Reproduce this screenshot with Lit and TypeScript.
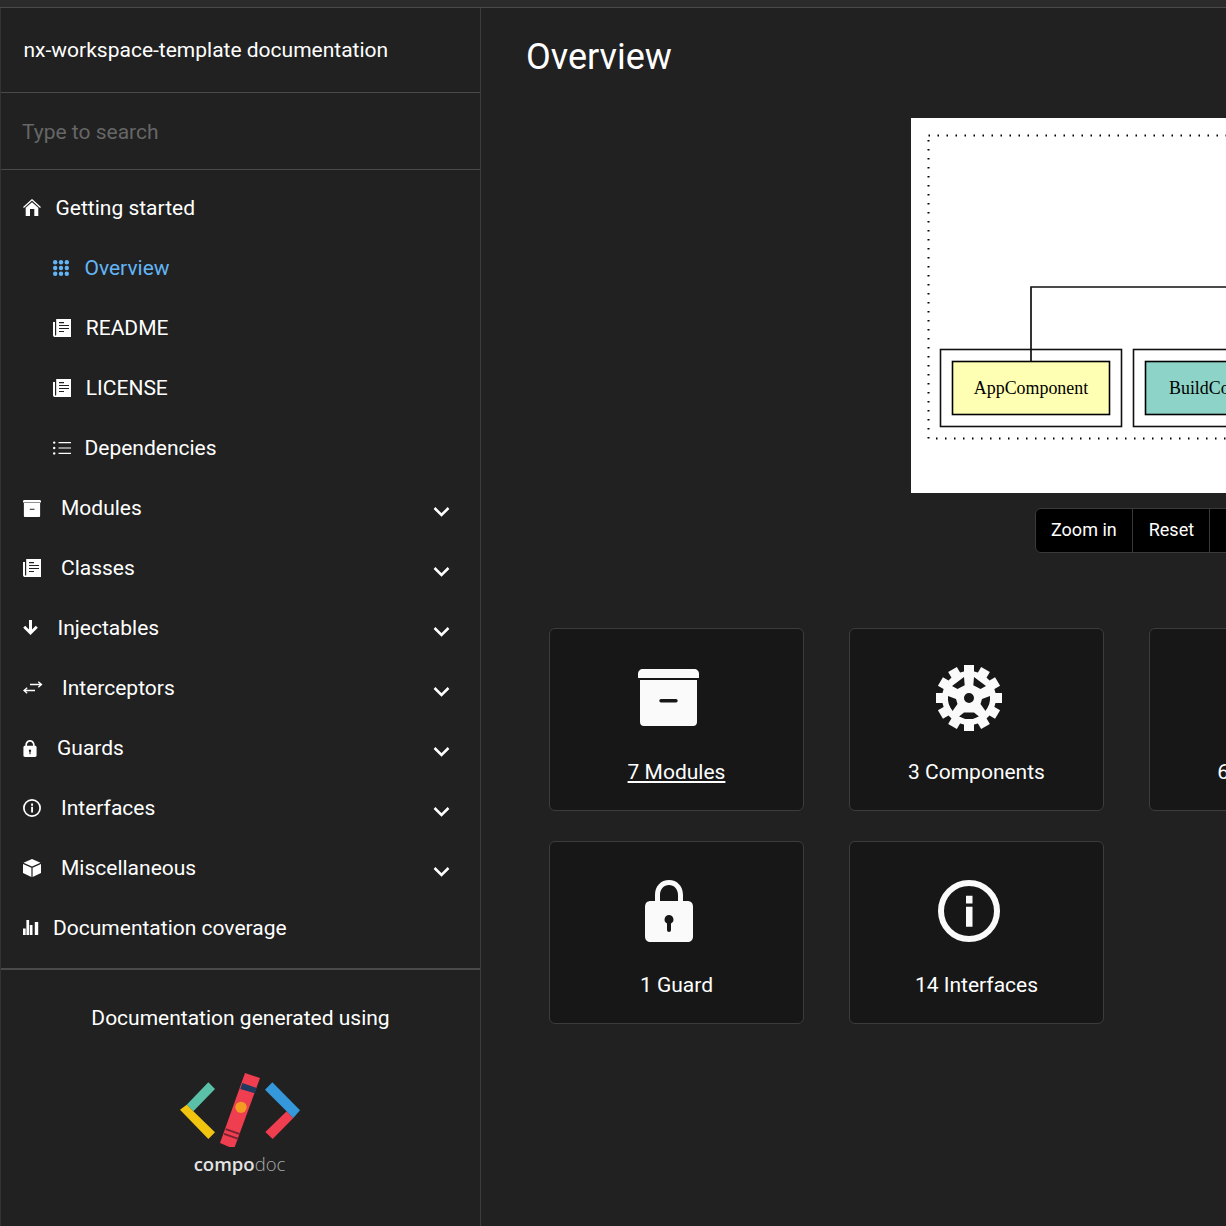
import { LitElement, html, css, svg, nothing } from 'lit'
import { customElement } from 'lit/decorators.js'

const infoIcon = (size: number) => svg`<svg width=${size} height=${size} viewBox="0 0 62 62"><circle cx="31" cy="31" r="28" fill="none" stroke="currentColor" stroke-width="6"/><path d="M28 15.700h6.500v7.700H28zM28 26.700h6.500v20H28z"/></svg>`

const keypadPos = [2.2, 8, 13.8]

const icons: Record<string, unknown> = {
  home: svg`<svg width="18" height="18" viewBox="0 0 18 18"><path d="M.5 8.500L9 .8l8.500 7.700" fill="none" stroke="currentColor" stroke-width="1.300"/><path d="M9 3.200l6.300 5.500V17h-4v-7H7v7H2.700V8.700z"/></svg>`,
  keypad: svg`<svg width="16" height="16" viewBox="0 0 16 16">${keypadPos.map(y => keypadPos.map(x => svg`<circle cx=${x} cy=${y} r="2.200"/>`))}</svg>`,
  paper: svg`<svg width="18" height="18" viewBox="0 0 18 18"><path fill-rule="evenodd" d="M4 0h14v18H2c-1 0-2-.6-2-2V3h2v13c0 .4.300.6.6.6s.6-.2.6-.6V0zm2 3v1.200h5V3zm0 3v1h10V6zm0 3v1h10V9zm0 3v1h5v-1z"/></svg>`,
  list: svg`<svg width="18" height="14" viewBox="0 0 18 14"><path d="M5.500 1h12.500v1.200H5.500zM5.500 6.400h12.500v1.200H5.500zM5.500 11.800h12.500V13H5.500z"/><circle cx="1.200" cy="1.600" r="1.200"/><circle cx="1.200" cy="7" r="1.200"/><circle cx="1.200" cy="12.400" r="1.200"/></svg>`,
  archive: svg`<svg width="18" height="17" viewBox="0 0 61 57"><path d="M5 0h51c3 0 5 2 5 5v3H0V5c0-3 2-5 5-5z"/><path fill-rule="evenodd" d="M3 10h55v44c0 2-1 3-3 3H6c-2 0-3-1-3-3zm20 19v4h16v-4z"/></svg>`,
  arrow: svg`<svg width="15" height="16" viewBox="0 0 15 16"><path d="M6 0h3v9.500l3.800-3.800 2 2L7.500 15 .2 7.700l2-2L6 9.500z"/></svg>`,
  swap: svg`<svg width="20" height="14" viewBox="0 0 20 14"><path fill="none" stroke="currentColor" stroke-width="1.300" d="M7 3.500h11.500M15.300.8l3.200 2.700-3.200 2.700M12 9.500H1M4.200 6.800L1 9.500l3.200 2.700"/></svg>`,
  lock: svg`<svg width="14" height="17" viewBox="0 0 48 62"><path fill-rule="evenodd" d="M7 21V18C7 8 14 0 24 0s17 8 17 18v3h1c4 0 6 2 6 6v29c0 4-2 6-6 6H6c-4 0-6-2-6-6V27c0-4 2-6 6-6zm6 0h22V18c0-7-5-12-11-12s-11 5-11 12zm11 14a4.500 4.500 0 0 0-2 8.500V50a2 2 0 0 0 4 0v-6.500A4.500 4.500 0 0 0 24 35z"/></svg>`,
  info: infoIcon(18),
  cube: svg`<svg width="18" height="18" viewBox="0 0 18 18"><path d="M9 0l8.500 3.800L9 7.600.5 3.800zM0 5l8.400 3.800V18L0 14zM18 5L9.600 8.800V18l8.400-4z"/></svg>`,
  bars: svg`<svg width="16" height="16" viewBox="0 0 16 16"><path d="M0 8.500h2.700V15H0zM3.400 0h2.700v15H3.400zM6.800 5h2.700v10H6.800zM11.800 2h3.400v13h-3.400z"/></svg>`
}

const cardIcons: Record<string, unknown> = {
  archive: svg`<svg width="61" height="59" viewBox="0 0 61 59"><path d="M5 0h51c3 0 5 2 5 5v4H0V5c0-3 2-5 5-5z"/><path fill-rule="evenodd" d="M2 11h57v42c0 2.500-1.500 4-4 4H6c-2.500 0-4-1.500-4-4zm21 19a1.700 1.700 0 0 0 0 3.400h15a1.700 1.700 0 0 0 0-3.400z"/></svg>`,
  gear: svg`<svg width="66" height="66" viewBox="0 0 66 66"><g transform="translate(33 33)">${[0, 30, 60, 90, 120, 150, 180, 210, 240, 270, 300, 330].map(a => svg`<rect x="-5" y="-33" width="10" height="12" transform="rotate(${a})"/>`)}<path fill-rule="evenodd" d="M0-27a27 27 0 1 0 0 54a27 27 0 1 0 0-54zM-5-21L-17-12L-11.500-9L-4.300-12.700zM5-21L17-12L11.500-9L4.300-12.700zM-21-2A21 21 0 0 0-16.500 13L-11.500 6L-13 1zM21-2A21 21 0 0 1 16.500 13L11.500 6L13 1zM-10 18.500A21 21 0 0 0 10 18.500L5 14.500H-5zM0-5a5 5 0 1 0 0 10a5 5 0 1 0 0-10z"/></g></svg>`,
  arrow: svg`<svg width="60" height="60" viewBox="0 0 15 15"><path d="M6 0h3v9.500l3.800-3.800 2 2L7.500 15 .2 7.700l2-2L6 9.500z"/></svg>`,
  lock: svg`<svg width="48" height="62" viewBox="0 0 48 62"><path fill-rule="evenodd" d="M10 21V15C10 6 16 0 24 0s14 6 14 15v6h4c4 0 6 2 6 6v29c0 4-2 6-6 6H6c-4 0-6-2-6-6V27c0-4 2-6 6-6zm5 0h18V15c0-6-4-10-9-10s-9 4-9 10zm9 14a4.500 4.500 0 0 0-2 8.500V50a2 2 0 0 0 4 0v-6.500A4.500 4.500 0 0 0 24 35z"/></svg>`,
  info: infoIcon(62)
}

interface NavItem {
  label: string
  icon: string
  box: number
  sub?: boolean
  active?: boolean
  chevron?: boolean
}

const nav: NavItem[] = [
  { label: 'Getting started', icon: 'home', box: 32.500 },
  { label: 'Overview', icon: 'keypad', box: 31.500, sub: true, active: true },
  { label: 'README', icon: 'paper', box: 32.800, sub: true },
  { label: 'LICENSE', icon: 'paper', box: 32.800, sub: true },
  { label: 'Dependencies', icon: 'list', box: 31.500, sub: true },
  { label: 'Modules', icon: 'archive', box: 38, chevron: true },
  { label: 'Classes', icon: 'paper', box: 38, chevron: true },
  { label: 'Injectables', icon: 'arrow', box: 34.500, chevron: true },
  { label: 'Interceptors', icon: 'swap', box: 39, chevron: true },
  { label: 'Guards', icon: 'lock', box: 34, chevron: true },
  { label: 'Interfaces', icon: 'info', box: 38, chevron: true },
  { label: 'Miscellaneous', icon: 'cube', box: 38, chevron: true },
  { label: 'Documentation coverage', icon: 'bars', box: 30 }
]

const cards = [
  { label: '7 Modules', icon: 'archive', link: true },
  { label: '3 Components', icon: 'gear' },
  { label: '6 Injectables', icon: 'arrow' },
  { label: '1 Guard', icon: 'lock' },
  { label: '14 Interfaces', icon: 'info' }
]

@customElement('app-root')
export class AppRoot extends LitElement {
  static styles = css`
    :host {
      display: block;
      width: 1226px;
      height: 1226px;
      overflow: hidden;
      background: #212121;
      color: #fff;
      font-family: Roboto, "Liberation Sans", sans-serif;
      font-size: 21px;
    }

    .topbar {
      height: 7px;
      background: #2b2b2b;
      border-bottom: 1px solid #4a4a4a;
    }

    .layout {
      display: flex;
      height: 1218px;
    }

    .sidebar {
      flex: none;
      width: 479px;
      border-left: 1px solid #333;
      border-right: 1px solid #3c3c3c;
      display: flex;
      flex-direction: column;
    }

    .title {
      height: 85px;
      box-sizing: border-box;
      padding: 0 0 0 22.500px;
      display: flex;
      align-items: center;
      border-bottom: 1px solid #4a4a4a;
    }

    .search {
      height: 77px;
      box-sizing: border-box;
      padding: 2px 21px 0;
      display: flex;
      border-bottom: 1px solid #4a4a4a;
    }

    .search input {
      flex: 1;
      border: 0;
      padding: 0;
      background: transparent;
      color: #fff;
      font: inherit;
      outline: none;
    }

    .search input::placeholder {
      color: #666;
      opacity: 1;
    }

    .menu {
      padding: 8px 0 10px;
      border-bottom: 2px solid #4a4a4a;
    }

    .item {
      height: 60px;
      display: flex;
      align-items: center;
      padding-left: 22px;
    }

    .item.sub {
      padding-left: 52px;
    }

    .item.active {
      color: #64b5f6;
    }

    .item .icon {
      flex: none;
      display: flex;
      align-items: center;
    }

    .item svg {
      display: block;
      fill: currentColor;
    }

    .item .label {
      flex: 1;
    }

    .chevron {
      margin: 7px 30px 0 0;
    }

    .generated {
      margin-top: 36px;
      text-align: center;
      line-height: 24px;
    }

    .logo {
      display: flex;
      flex-direction: column;
      align-items: center;
      margin-top: 43px;
      padding-right: 2px;
    }

    .logo svg {
      display: block;
    }

    .logo-name {
      margin-top: 5px;
      font-family: "Open Sans", sans-serif;
      font-size: 18.500px;
      line-height: 24px;
      font-weight: 600;
      color: #e4e4e4;
    }

    .logo-name span {
      font-weight: 300;
      color: #aaa;
    }

    .main {
      flex: 1;
      min-width: 0;
      padding: 24px 0 0 45px;
    }

    h1 {
      margin: 0;
      font-size: 36px;
      font-weight: 400;
      line-height: 50px;
    }

    .graph {
      margin: 36px 0 0 385px;
      height: 375px;
      background: #fff;
      overflow: hidden;
    }

    .graph svg {
      display: block;
    }

    .graph text {
      font-family: "Liberation Serif", serif;
      font-size: 17.900px;
      fill: #000;
    }

    .zoom-row {
      width: 700px;
      overflow: hidden;
    }

    .zoom {
      display: inline-flex;
      margin: 15px 0 0 509px;
      height: 45px;
      box-sizing: border-box;
      background: #000;
      border: 1px solid #3a3a3a;
      border-radius: 6px;
      white-space: nowrap;
    }

    .zoom div {
      display: flex;
      align-items: center;
      padding: 0 15px 2px 16px;
      font-size: 18px;
      border-left: 1px solid #3a3a3a;
    }

    .zoom div:first-child {
      padding-left: 15px;
      border-left: 0;
    }

    .cards {
      display: grid;
      grid-template-columns: repeat(3, 255px);
      gap: 30px 45px;
      margin: 75px 0 0 23px;
    }

    .card {
      height: 183px;
      box-sizing: border-box;
      background: #171717;
      border: 1px solid #3c3c3c;
      border-radius: 6px;
      display: flex;
      flex-direction: column;
      align-items: center;
    }

    .card .pic {
      height: 66px;
      margin: 36px 16px 0 0;
      display: flex;
      align-items: center;
      color: #fafafa;
    }

    .card .pic svg {
      display: block;
      fill: currentColor;
    }

    .card .name {
      margin-top: 29px;
      line-height: 24px;
    }

    .card .name.link {
      text-decoration: underline;
    }
  `

  renderItem (item: NavItem) {
    return html`
      <div class="item ${item.sub ? 'sub' : ''} ${item.active ? 'active' : ''}">
        <span class="icon" style="width:${item.box}px">${icons[item.icon]}</span>
        <span class="label">${item.label}</span>
        ${item.chevron
          ? html`<svg class="chevron" width="17" height="12" viewBox="0 0 17 12"><path d="M1.500 2l7 7 7-7" fill="none" stroke="#fff" stroke-width="2.500"/></svg>`
          : nothing}
      </div>
    `
  }

  renderCard (card: typeof cards[number]) {
    return html`
      <div class="card">
        <div class="pic">${cardIcons[card.icon]}</div>
        <div class="name ${card.link ? 'link' : ''}">${card.label}</div>
      </div>
    `
  }

  renderLogo () {
    return html`
      <svg width="120" height="74" viewBox="60 40 360 222">
        <path fill="#5bc0a8" d="M145 68l20 20-65 67-20-20z"/>
        <path fill="#f1c40f" d="M60 150l20-15 85 83-20 20z"/>
        <path fill="#ee3e4f" d="M380 155l20 20-62 63-22-21z"/>
        <path fill="#3498db" d="M337 68l83 84-20 23-85-85z"/>
        <path fill="#ee3e4f" d="M255 40l45 15-78 213-42-18z"/>
        <path fill="#1f3a5f" d="M247 70l43 15-6 16-43-13z"/>
        <circle cx="243" cy="143" r="17" fill="#f39c23"/>
        <path fill="#7a2232" d="M198 206l43 15-2 5-43-15zM193 220l43 15-2 5-43-15z"/>
      </svg>
      <div class="logo-name">compo<span>doc</span></div>
    `
  }

  renderGraph () {
    return html`
      <svg width="315" height="375" viewBox="911 118 315 375">
        <rect x="928.500" y="135.500" width="600" height="303" fill="none" stroke="#000" stroke-width="2" stroke-dasharray="1.500 7.500"/>
        <path d="M1031 361V287H1226" fill="none" stroke="#111" stroke-width="1.700"/>
        <rect x="940.500" y="349.500" width="181" height="77" fill="none" stroke="#111" stroke-width="1.600"/>
        <rect x="952.500" y="361.500" width="157" height="53" fill="#ffffb3" stroke="#000" stroke-width="1.600"/>
        <text x="1031" y="394" text-anchor="middle">AppComponent</text>
        <rect x="1133.500" y="349.500" width="181" height="77" fill="none" stroke="#111" stroke-width="1.600"/>
        <rect x="1145.500" y="361.500" width="157" height="53" fill="#8dd3c7" stroke="#000" stroke-width="1.600"/>
        <text x="1169" y="394">BuildComponent</text>
      </svg>
    `
  }

  render () {
    return html`
      <div class="topbar"></div>
      <div class="layout">
        <aside class="sidebar">
          <div class="title">nx-workspace-template documentation</div>
          <div class="search"><input placeholder="Type to search" /></div>
          <nav class="menu">${nav.map(item => this.renderItem(item))}</nav>
          <div class="generated">Documentation generated using</div>
          <div class="logo">${this.renderLogo()}</div>
        </aside>
        <main class="main">
          <h1>Overview</h1>
          <div class="graph">${this.renderGraph()}</div>
          <div class="zoom-row">
            <div class="zoom">
              <div>Zoom in</div>
              <div>Reset</div>
              <div>Zoom out</div>
            </div>
          </div>
          <div class="cards">${cards.map(card => this.renderCard(card))}</div>
        </main>
      </div>
    `
  }
}
